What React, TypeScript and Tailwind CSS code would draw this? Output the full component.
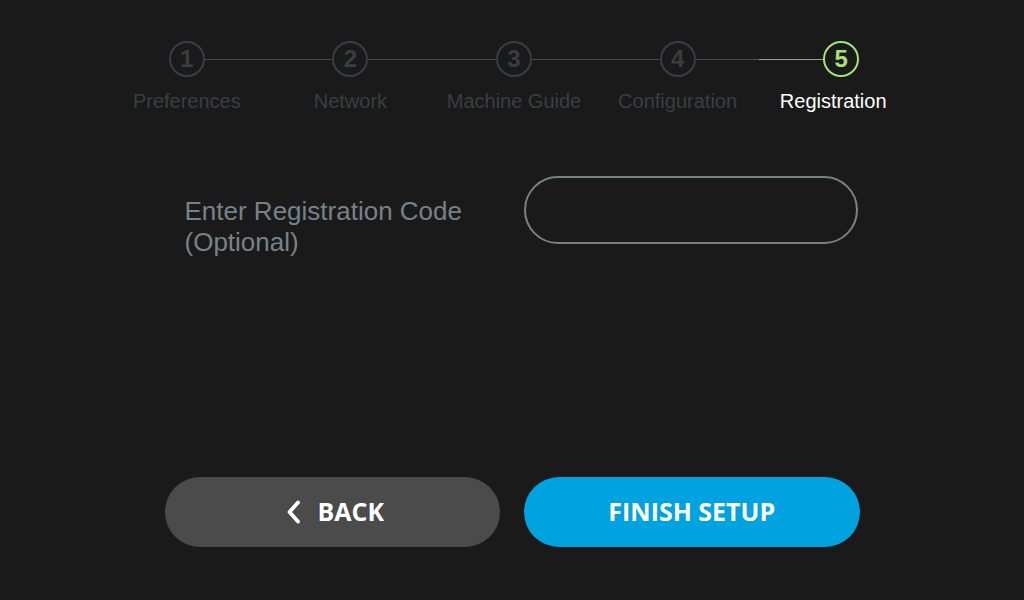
const steps = ['Preferences', 'Network', 'Machine Guide', 'Configuration', 'Registration'];
const active = 4;

function Stepper() {
  return (
    <div className="mx-auto grid w-[818px] translate-x-[2px] grid-cols-5 pt-[41px]">
      {steps.map((label, i) => {
        const isActive = i === active;
        return (
          <div key={label} className="flex flex-col items-center">
            <div className="flex w-full items-center">
              <div
                className={`h-px flex-1 ${
                  i === 0 ? 'bg-transparent' : isActive ? 'bg-[#9c9c9c]' : 'bg-[#4a4c4e]'
                }`}
              />
              <div
                className={`flex h-[36px] w-[36px] items-center justify-center rounded-full border-2 text-[24px] font-bold leading-none ${
                  isActive ? 'border-[#a6e07a] text-[#a6e07a]' : 'border-[#3a3d41] text-[#3a3d41]'
                }`}
              >
                {i + 1}
              </div>
              <div
                className={`h-px flex-1 ${i === steps.length - 1 ? 'bg-transparent' : 'bg-[#4a4c4e]'}`}
              />
            </div>
            <div
              className={`mt-[11px] whitespace-nowrap text-[20px] leading-[26px] ${
                isActive ? '-translate-x-[8px] text-white' : 'text-[#3a3e42]'
              }`}
            >
              {label}
            </div>
          </div>
        );
      })}
    </div>
  );
}

export default function App() {
  return (
    <div
      className="flex h-[600px] w-[1024px] flex-col bg-[#1a1a1a]"
      style={{ fontFamily: '"Liberation Sans", Arial, sans-serif' }}
    >
      <Stepper />

      <div className="mx-auto mt-[62px] grid w-[695px] grid-cols-2 gap-[24px]">
        <div className="pl-[20px] pt-[20px] text-[26px] leading-[31px] text-[#76828b]">
          Enter Registration Code
          <br />
          (Optional)
        </div>
        <input
          type="text"
          className="h-[68px] w-[334px] rounded-full border-2 border-[#76828a] bg-transparent px-6 text-xl text-white outline-none"
        />
      </div>

      <div
        className="mx-auto mt-auto mb-[53px] grid w-[695px] grid-cols-2 gap-[24px]"
        style={{ fontFamily: '"Open Sans", sans-serif' }}
      >
        <button className="flex h-[70px] items-center justify-center gap-[16px] rounded-full bg-[#4b4b4b] pl-[6px] text-[25px] font-bold text-white">
          <svg width="15" height="24" viewBox="0 0 15 24" fill="none">
            <polyline
              points="12,2.5 3.5,12 12,21.5"
              stroke="white"
              strokeWidth="3.8"
              strokeLinecap="round"
              strokeLinejoin="round"
            />
          </svg>
          BACK
        </button>
        <button className="flex h-[70px] items-center justify-center rounded-full bg-[#00a2e0] text-[25px] font-bold text-white">
          FINISH SETUP
        </button>
      </div>
    </div>
  );
}
